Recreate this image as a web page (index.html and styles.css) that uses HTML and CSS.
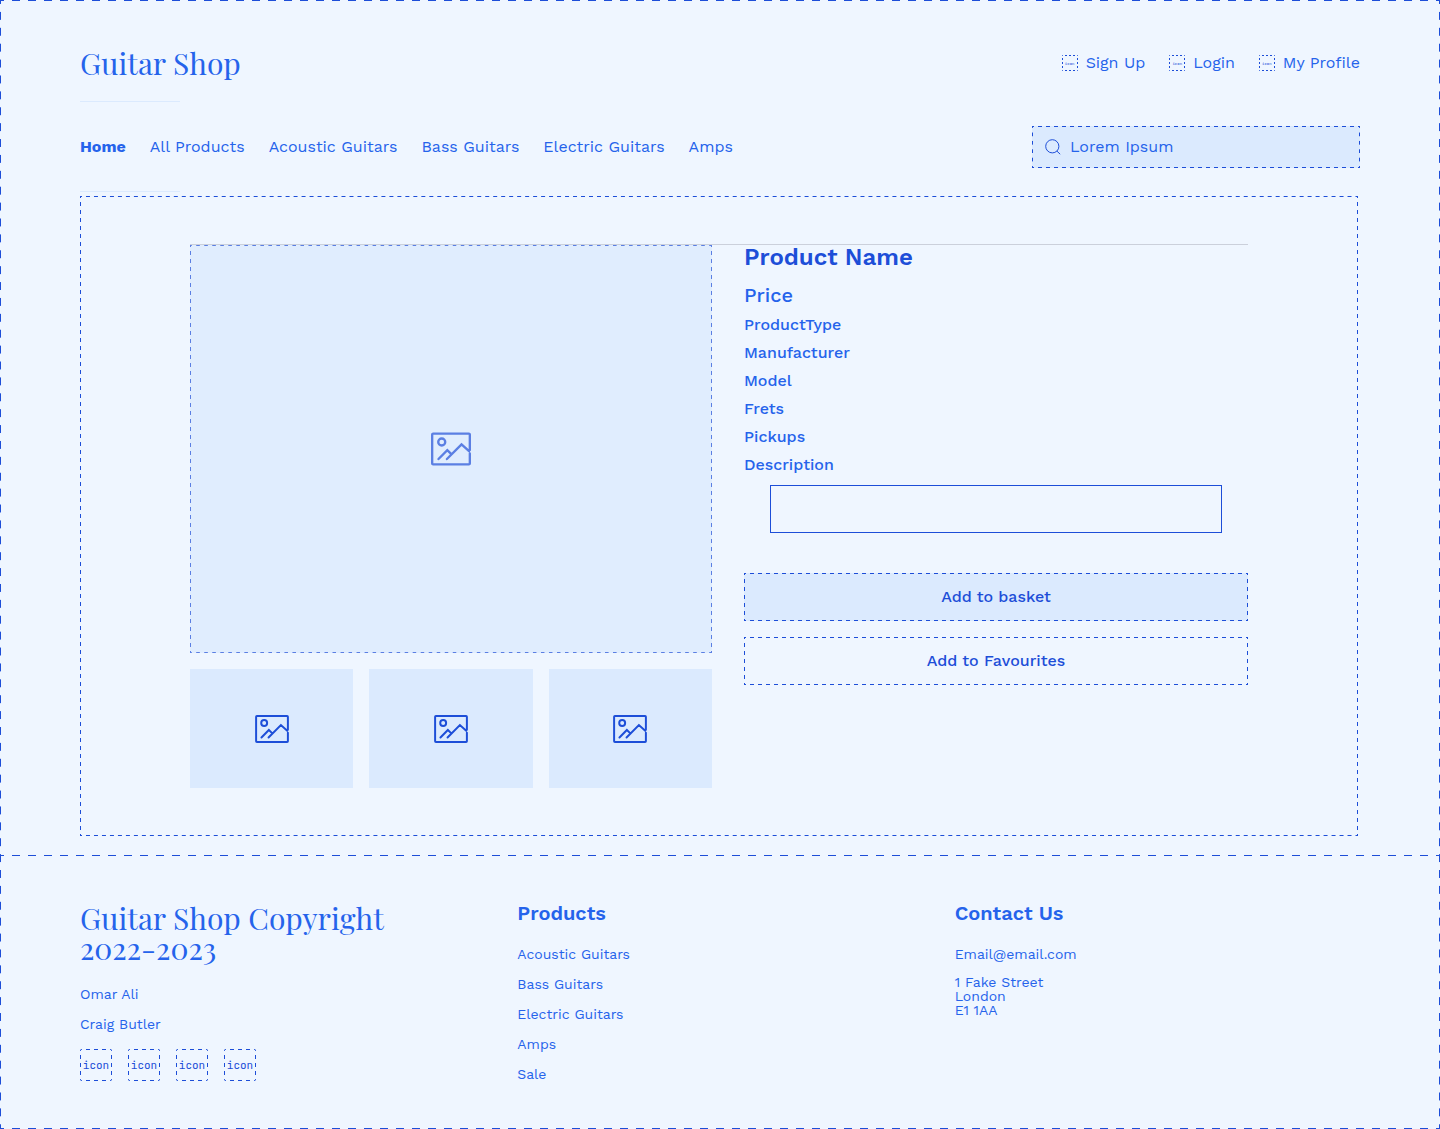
FILE: index.html
```html
<!DOCTYPE html>
<html lang="en">
<head>
<meta charset="utf-8">
<meta name="viewport" content="width=device-width, initial-scale=1">
<title>Guitar Shop</title>
<link rel="stylesheet" href="styles.css">
</head>
<body>
<svg class="sprite" aria-hidden="true">
  <symbol id="picture" viewBox="0 0 41 34">
    <path d="M39.8 18V2.2Q39.8 1.2 38.8 1.2H2.2Q1.2 1.2 1.2 2.2V31.8Q1.2 32.8 2.2 32.8H38.8Q39.8 32.8 39.8 31.8V21.5M7.7 27.3L16.7 18.2L20.6 22M16.3 27.3L31.3 12.2L39 19.2"/>
    <circle cx="11" cy="9.8" r="3.6"/>
  </symbol>
</svg>
<div class="page">
  <header class="header">
    <div class="header-row">
      <a class="brand" href="#">Guitar Shop</a>
      <nav class="account" aria-label="Account">
        <a href="#"><span class="icon-box icon-box-small">icon</span>Sign Up</a>
        <a href="#"><span class="icon-box icon-box-small">icon</span>Login</a>
        <a href="#"><span class="icon-box icon-box-small">icon</span>My Profile</a>
      </nav>
    </div>
    <hr class="rule">
    <div class="header-row nav-row">
      <nav class="menu" aria-label="Categories">
        <a class="current" href="#" aria-current="page">Home</a>
        <a href="#">All Products</a>
        <a href="#">Acoustic Guitars</a>
        <a href="#">Bass Guitars</a>
        <a href="#">Electric Guitars</a>
        <a href="#">Amps</a>
      </nav>
      <label class="search dashed">
        <svg width="16" height="16" viewBox="0 0 16 16" aria-hidden="true"><circle cx="7.3" cy="7.3" r="6.6"/><path d="M12 12.2L15.2 15.2"/></svg>
        <input type="search" placeholder="Lorem Ipsum" aria-label="Search">
      </label>
    </div>
    <hr class="rule">
  </header>

  <main class="product dashed">
    <div class="product-grid">
      <section class="gallery" aria-label="Product images">
        <div class="picture picture-main dashed"><svg><use href="#picture"/></svg></div>
        <div class="picture"><svg><use href="#picture"/></svg></div>
        <div class="picture"><svg><use href="#picture"/></svg></div>
        <div class="picture"><svg><use href="#picture"/></svg></div>
      </section>
      <section class="details">
        <h1>Product Name</h1>
        <p class="price">Price</p>
        <p>ProductType</p>
        <p>Manufacturer</p>
        <p>Model</p>
        <p>Frets</p>
        <p>Pickups</p>
        <label for="description">Description</label>
        <textarea id="description"></textarea>
        <div class="actions">
          <button class="button button-filled dashed" type="button">Add to basket</button>
          <button class="button dashed" type="button">Add to Favourites</button>
        </div>
      </section>
    </div>
  </main>

  <footer class="footer">
    <section class="footer-column">
      <p class="brand">Guitar Shop Copyright<br>2022-2023</p>
      <p>Omar Ali</p>
      <p>Craig Butler</p>
      <div class="socials">
        <a class="icon-box" href="#">icon</a>
        <a class="icon-box" href="#">icon</a>
        <a class="icon-box" href="#">icon</a>
        <a class="icon-box" href="#">icon</a>
      </div>
    </section>
    <section class="footer-column">
      <h2>Products</h2>
      <a href="#">Acoustic Guitars</a>
      <a href="#">Bass Guitars</a>
      <a href="#">Electric Guitars</a>
      <a href="#">Amps</a>
      <a href="#">Sale</a>
    </section>
    <section class="footer-column contact">
      <h2>Contact Us</h2>
      <a href="mailto:Email@email.com">Email@email.com</a>
      <address>1 Fake Street<br>London<br>E1 1AA</address>
    </section>
  </footer>
</div>
</body>
</html>
```
FILE: styles.css
```css
:root {
  --paper: #eff6ff;
  --tint: #dbeafe;
  --text: #2563eb;
  --ink: #1d4ed8;
}

* { box-sizing: border-box; }

body {
  margin: 0;
  background: var(--paper);
  color: var(--text);
  font: 16px/16px "Work Sans", Inter, "Open Sans", sans-serif;
}

h1, h2, p { margin: 0; }
a { color: inherit; text-decoration: none; }
svg { display: block; fill: none; stroke: var(--ink); }
.sprite { position: absolute; width: 0; height: 0; }

/* Dashed outlines: one tile per dash, starting and ending on a half dash */
.page, .dashed, .icon-box {
  --dash: 8px;
  --across: linear-gradient(90deg, var(--ink) 25%, transparent 25% 75%, var(--ink) 75%);
  --down: linear-gradient(var(--ink) 25%, transparent 25% 75%, var(--ink) 75%);
  background-image: var(--across), var(--across), var(--down), var(--down);
  background-position: 0 0, 0 100%, 0 0, 100% 0;
  background-size: var(--dash) 1px, var(--dash) 1px, 1px var(--dash), 1px var(--dash);
  background-repeat: round no-repeat, round no-repeat, no-repeat round, no-repeat round;
}

.page {
  --dash: 16px;
  min-height: 100vh;
}

.brand {
  font: 30px/30px "Playfair Display", "Liberation Serif", serif;
}

.header { padding: 48px 80px 0; }

.header-row {
  display: flex;
  flex-wrap: wrap;
  justify-content: space-between;
  align-items: center;
  gap: 16px 24px;
}

.rule {
  width: 100px;
  height: 1px;
  margin: 23px 0 24px;
  border: 0;
  background: var(--tint);
}

.nav-row + .rule { margin-bottom: 4px; }

.account, .menu {
  display: flex;
  flex-wrap: wrap;
  gap: 16px 24px;
}

.account a {
  display: flex;
  align-items: center;
  gap: 8px;
}

.current { font-weight: 700; }

.icon-box {
  display: grid;
  place-items: center;
  width: 32px;
  height: 32px;
  border-radius: 2px;
  color: var(--ink);
  font: 11px/11px "JetBrains Mono", "Roboto Mono", "DejaVu Sans Mono", monospace;
}

.icon-box-small {
  --dash: 4px;
  width: 16px;
  height: 16px;
  border-radius: 1px;
  font-size: 4px;
}

.search {
  display: flex;
  align-items: center;
  gap: 9px;
  width: 328px;
  height: 42px;
  padding: 0 13px;
  background-color: var(--tint);
}

.search input {
  flex: 1;
  min-width: 0;
  padding: 0 0 2px;
  border: 0;
  outline: 0;
  background: none;
  color: var(--text);
  font: inherit;
}

.search input::placeholder { color: var(--text); opacity: 1; }

.product {
  margin: 0 82px 0 80px;
  padding: 48px 110px;
}

.product-grid {
  display: grid;
  grid-template-columns: 522fr 504fr;
  align-items: start;
  gap: 32px;
  border-top: 1px solid #cbd0db;
}

.gallery {
  display: grid;
  grid-template-columns: repeat(3, 1fr);
  gap: 16px;
}

.picture {
  display: grid;
  place-items: center;
  height: 119px;
  background-color: var(--tint);
}

.picture svg {
  width: 34px;
  height: 28px;
  stroke-width: 2.4;
  stroke-linecap: round;
}

.picture-main {
  grid-column: 1 / -1;
  height: 408px;
  opacity: 0.7;
}

.picture-main svg { width: 40px; height: 34px; }

.details {
  display: flex;
  flex-direction: column;
  gap: 12px;
  font-weight: 500;
}

.details h1 {
  margin-bottom: 4px;
  color: var(--ink);
  font-size: 24px;
  line-height: 24px;
  font-weight: 600;
}

.details .price { font-size: 20px; line-height: 20px; }

.details textarea {
  height: 48px;
  margin: 0 26px;
  padding: 12px;
  border: 1px solid var(--ink);
  border-radius: 0;
  background: none;
  color: var(--text);
  font: inherit;
  resize: none;
}

.actions {
  display: grid;
  gap: 16px;
  margin-top: 28px;
}

.button {
  height: 48px;
  border: 0;
  background-color: transparent;
  color: var(--ink);
  font: inherit;
}

.button-filled { background-color: var(--tint); }

.footer {
  display: grid;
  grid-template-columns: repeat(3, 1fr);
  gap: 32px;
  margin-top: 19px;
  padding: 48px 80px;
  background: linear-gradient(90deg, var(--ink) 25%, transparent 25% 75%, var(--ink) 75%) 0 0 / 16px 1px round no-repeat;
  font-size: 14px;
  line-height: 14px;
}

.footer-column {
  display: flex;
  flex-direction: column;
  align-items: flex-start;
  gap: 16px;
}

.footer-column .brand { margin-bottom: 8px; }

.footer-column h2 {
  margin-bottom: 8px;
  font-size: 20px;
  line-height: 20px;
  font-weight: 600;
}

.contact { gap: 14px; }
.contact h2 { margin-bottom: 10px; }
.contact address { font-style: normal; }

.socials {
  display: flex;
  gap: 16px;
  margin-top: 2px;
}
```
